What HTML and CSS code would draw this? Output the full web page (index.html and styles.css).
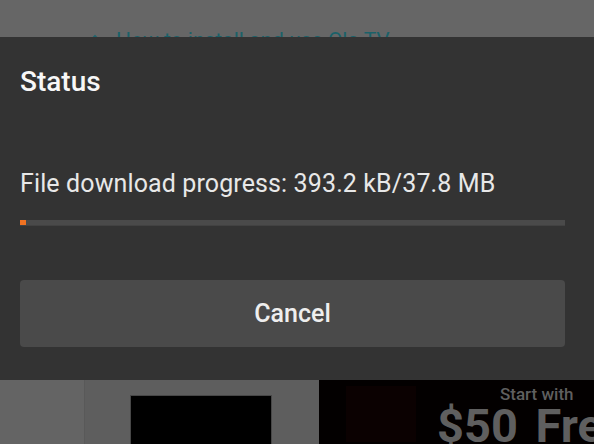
FILE: index.html
```html
<!DOCTYPE html>
<html>
<head>
<meta charset="utf-8">
<link rel="stylesheet" href="styles.css">
</head>
<body>
<div class="page">
  <div class="top">
    <div class="link-row">
      <svg class="home-icon" width="12" height="12" viewBox="0 0 12 12"><path d="M1.5 6 L6 1.8 L10.5 6 M2.8 5 V10.5 H9.2 V5" fill="none" stroke="#1b6670" stroke-width="1.4"/></svg>
      <span class="link-text">How to install and use Ola TV</span>
    </div>
  </div>
  <div class="bottom">
    <div class="side"></div>
    <div class="main"><div class="thumb"></div></div>
    <div class="ad">
      <div class="ad-logo"></div>
      <div class="ad-copy">
        <div class="ad-small">Start with</div>
        <div class="ad-big">$50 Free</div>
      </div>
    </div>
  </div>
</div>
<div class="dialog">
  <div class="title">Status</div>
  <div class="message">File download progress: 393.2 kB/37.8 MB</div>
  <div class="progress"><div class="progress-fill" style="width:6px"></div></div>
  <button class="cancel">Cancel</button>
</div>
</body>
</html>
```
FILE: styles.css
```css
html, body {
  margin: 0;
  padding: 0;
}
body {
  width: 594px;
  height: 444px;
  overflow: hidden;
  position: relative;
  font-family: Roboto, "Liberation Sans", sans-serif;
  background: #666666;
}
.page {
  display: grid;
  grid-template-rows: 380px 64px;
  height: 444px;
}
.top {
  background: #666666;
  overflow: hidden;
}
.link-row {
  display: flex;
  align-items: center;
  gap: 15px;
  padding: 28px 0 0 89px;
  color: #1a6169;
  font-size: 21px;
  line-height: 24px;
}
.home-icon {
  flex: none;
}
.bottom {
  display: flex;
  overflow: hidden;
}
.side {
  flex: none;
  width: 84px;
  background: #646464;
  border-right: 1px solid #595959;
}
.main {
  flex: none;
  width: 234px;
  background: #5e5e5e;
  padding: 15px 0 0 45px;
  box-sizing: border-box;
}
.thumb {
  width: 142px;
  height: 60px;
  background: #000;
  border: 1px solid #474747;
  box-sizing: border-box;
}
.ad {
  flex: 1;
  min-width: 0;
  background: #030000;
  display: flex;
  overflow: hidden;
}
.ad-logo {
  flex: none;
  width: 70px;
  height: 56px;
  margin: 6px 0 0 27px;
  background: #0b0101;
}
.ad-copy {
  flex: none;
  display: flex;
  flex-direction: column;
  margin-left: 21px;
  padding-top: 4px;
  white-space: nowrap;
  color: #5f5f5f;
}
.ad-small {
  font-size: 17px;
  font-weight: 500;
  line-height: 20px;
  margin-left: 63px;
}
.ad-big {
  font-size: 47px;
  font-weight: 700;
  line-height: 44px;
  word-spacing: 6px;
}
.dialog {
  position: absolute;
  left: 0;
  right: 0;
  top: 37px;
  height: 343px;
  background: #333333;
  padding: 30px 29px 0 20px;
  box-sizing: border-box;
  display: flex;
  flex-direction: column;
}
.title {
  color: #f7f7f7;
  font-size: 28px;
  font-weight: 500;
  line-height: 30px;
}
.message {
  margin-top: 72px;
  color: #e8e8e8;
  font-size: 25px;
  letter-spacing: 0.12px;
  line-height: 30px;
}
.progress {
  margin-top: 21px;
  height: 6px;
  background: #4a4a4a;
  border-bottom: 1px solid #424242;
  box-sizing: border-box;
}
.progress-fill {
  height: 5px;
  background: #f07222;
}
.cancel {
  margin-top: 54px;
  height: 67px;
  border: none;
  border-radius: 4px;
  background: #4a4a4a;
  color: #eeeeee;
  font-family: Roboto, "Liberation Sans", sans-serif;
  font-size: 25px;
  font-weight: 500;
  padding: 0;
}
```
